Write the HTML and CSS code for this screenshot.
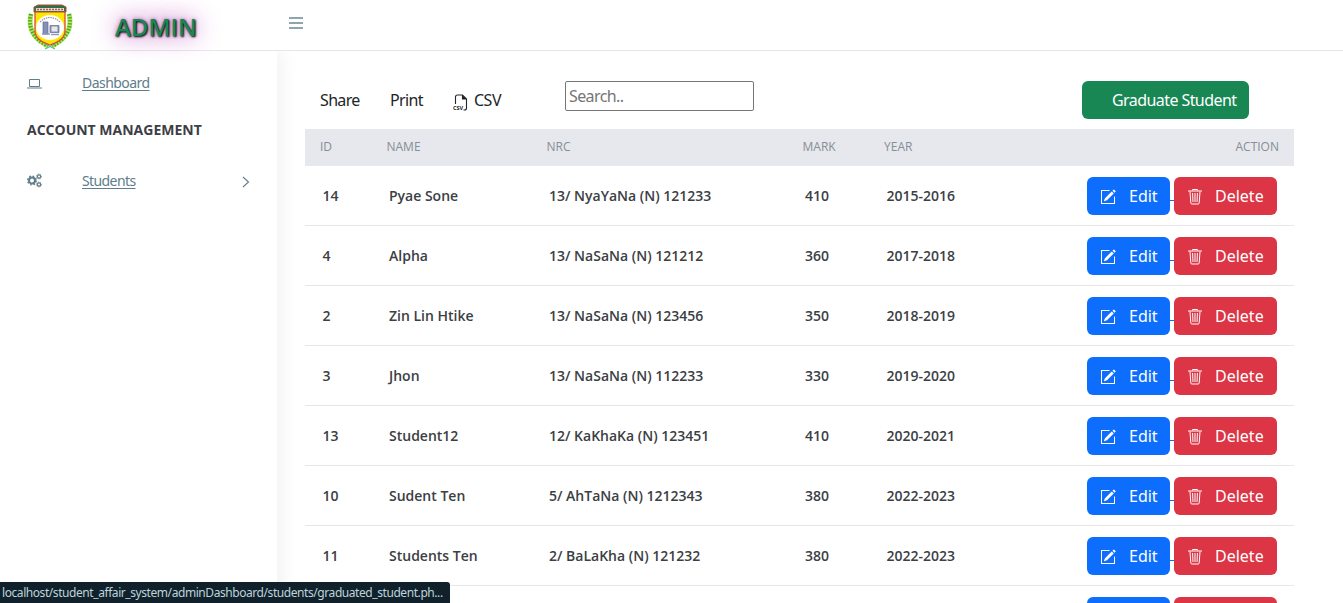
FILE: index.html
```html
<!DOCTYPE html>
<html lang="en">
<head>
<meta charset="utf-8">
<title>Admin - Graduated Students</title>
<link rel="stylesheet" href="styles.css">
</head>
<body>
<svg class="sprite" aria-hidden="true">
  <symbol id="edit" viewBox="0 0 16 16">
    <path d="M15.5 1.94a.5.5 0 0 1 0 .7L14.46 3.7l-2-2L13.5.65a.5.5 0 0 1 .7 0l1.3 1.29zM13.75 4.4l-2-2-6.8 6.82a.5.5 0 0 0-.13.2l-.8 2.42a.25.25 0 0 0 .31.31l2.42-.8a.5.5 0 0 0 .2-.13z"/>
    <path d="M1 1H9.500V2H2v12h12V7.500h1V15H1z"/>
  </symbol>
  <symbol id="trash" viewBox="0 0 16 17">
    <path d="M5.500 2.500v-1h5v1M1 3h14M3 3.500l.8 11.400q.1 1.100 1.100 1.100h6.200q1 0 1.100-1.100L13 3.500M5.600 5l.4 9M8 5v9M10.400 5l-.4 9" fill="none" stroke="currentColor" stroke-width="1"/>
  </symbol>
</svg>
<header class="topbar">
  <a class="brand">
    <svg class="crest" viewBox="0 0 46 46">
      <path d="M4 10Q-1 31 21 42M42 10Q47 31 25 42" fill="none" stroke="#b6e65a" stroke-width="5"/>
      <path d="M4 10Q-1 31 21 42M42 10Q47 31 25 42" fill="none" stroke="#4fa92d" stroke-width="4" stroke-dasharray="1.5 1.5"/>
      <path d="M18 45l10-5M28 45l-10-5" stroke="#5cc08a" stroke-width="1.3"/>
      <path d="M8 7h30v20q0 9-15 14Q8 36 8 27z" fill="#ffe600" stroke="#d94a35" stroke-width="1.300"/>
      <path d="M11 1h24l4 2v5H7V3z" fill="#2c7048" stroke="#b64b36"/>
      <path d="M9 5.500h28" stroke="#f1d8ca" stroke-width="3"/>
      <path d="M10 5.500h26" stroke="#a06562" stroke-width="1.500" stroke-dasharray="2 1"/>
      <ellipse cx="23" cy="23.500" rx="14" ry="12.500" fill="#fff"/>
      <path d="M13 18Q23 9 33 18" fill="none" stroke="#99978c" stroke-width="1.200" stroke-dasharray="1.500 .8"/>
      <path d="M16 18h5v12h-5zM23 21.500h9v7h-9z" fill="#8390b8" stroke="#626d91" stroke-width=".7"/>
      <path d="M24.500 22.500h6v5h-6z" fill="#e8e8e9"/>
      <path d="M15 30h8M24 30.500h8" stroke="#8f9abc" stroke-width="1.500"/>
    </svg>
    <span class="brand-name">ADMIN</span>
  </a>
  <span class="toggle"><i></i><i></i><i></i></span>
</header>
<div class="shell">
  <aside class="sidebar">
    <a class="nav-item">
      <svg class="nav-icon" viewBox="0 0 15 15"><path d="M2.500 4.500h10v7h-10zM0 13h15" fill="none" stroke="currentColor"/></svg>
      <span class="nav-label dashboard">Dashboard</span>
    </a>
    <h2 class="section">ACCOUNT MANAGEMENT</h2>
    <a class="nav-item">
      <svg class="nav-icon" viewBox="0 0 15 15" fill="none" stroke="currentColor">
        <circle cx="5" cy="7.500" r="3" stroke-width="2.100"/><circle cx="5" cy="7.500" r="4.400" stroke-width="1.300" stroke-dasharray="1.750 1.706"/>
        <circle cx="12" cy="3.500" r="1.600" stroke-width="1.200"/><circle cx="12" cy="3.500" r="2.400" stroke-dasharray="1 .885"/>
        <circle cx="12" cy="11.500" r="1.600" stroke-width="1.200"/><circle cx="12" cy="11.500" r="2.400" stroke-dasharray="1 .885"/>
      </svg>
      <span class="nav-label students">Students</span>
      <svg class="chevron" viewBox="0 0 8 12"><path d="M1 1l5.500 5L1 11" fill="none" stroke="currentColor" stroke-width="1.100"/></svg>
    </a>
  </aside>
  <main class="content">
    <div class="toolbar">
      <span class="share">Share</span>
      <span class="print">Print</span>
      <svg class="csv-icon" viewBox="0 0 16 17"><path d="M2.500 10V3q0-2 2-2h5l4 4v9q0 2-2 2h-1M9.500 1v4h4" fill="none" stroke="currentColor" stroke-width="1.100"/><path d="M9.500 1v4h4z" fill="currentColor"/><text x="0" y="16" class="csv-text">CSV</text></svg>
      <span class="csv">CSV</span>
      <input class="search" type="text" placeholder="Search..">
      <a class="btn graduate">Graduate Student</a>
    </div>
    <div class="table">
      <div class="row head"><span>ID</span><span>NAME</span><span>NRC</span><span>MARK</span><span>YEAR</span><span class="action">ACTION</span></div>
      <div class="row"><span>14</span><span>Pyae Sone</span><span>13/ NyaYaNa (N) 121233</span><span>410</span><span>2015-2016</span><div class="actions"><a class="btn edit"><svg><use href="#edit"/></svg>Edit</a><i class="gap"></i><a class="btn delete"><svg><use href="#trash"/></svg>Delete</a></div></div>
      <div class="row"><span>4</span><span>Alpha</span><span>13/ NaSaNa (N) 121212</span><span>360</span><span>2017-2018</span><div class="actions"><a class="btn edit"><svg><use href="#edit"/></svg>Edit</a><i class="gap"></i><a class="btn delete"><svg><use href="#trash"/></svg>Delete</a></div></div>
      <div class="row"><span>2</span><span>Zin Lin Htike</span><span>13/ NaSaNa (N) 123456</span><span>350</span><span>2018-2019</span><div class="actions"><a class="btn edit"><svg><use href="#edit"/></svg>Edit</a><i class="gap"></i><a class="btn delete"><svg><use href="#trash"/></svg>Delete</a></div></div>
      <div class="row"><span>3</span><span>Jhon</span><span>13/ NaSaNa (N) 112233</span><span>330</span><span>2019-2020</span><div class="actions"><a class="btn edit"><svg><use href="#edit"/></svg>Edit</a><i class="gap"></i><a class="btn delete"><svg><use href="#trash"/></svg>Delete</a></div></div>
      <div class="row"><span>13</span><span>Student12</span><span>12/ KaKhaKa (N) 123451</span><span>410</span><span>2020-2021</span><div class="actions"><a class="btn edit"><svg><use href="#edit"/></svg>Edit</a><i class="gap"></i><a class="btn delete"><svg><use href="#trash"/></svg>Delete</a></div></div>
      <div class="row"><span>10</span><span>Sudent Ten</span><span>5/ AhTaNa (N) 1212343</span><span>380</span><span>2022-2023</span><div class="actions"><a class="btn edit"><svg><use href="#edit"/></svg>Edit</a><i class="gap"></i><a class="btn delete"><svg><use href="#trash"/></svg>Delete</a></div></div>
      <div class="row"><span>11</span><span>Students Ten</span><span>2/ BaLaKha (N) 121232</span><span>380</span><span>2022-2023</span><div class="actions"><a class="btn edit"><svg><use href="#edit"/></svg>Edit</a><i class="gap"></i><a class="btn delete"><svg><use href="#trash"/></svg>Delete</a></div></div>
      <div class="row last"><span></span><span></span><span></span><span></span><span></span><div class="actions"><a class="btn edit"></a><i class="gap"></i><a class="btn delete"></a></div></div>
    </div>
  </main>
</div>
<div class="status">localhost/student_affair_system/adminDashboard/students/graduated_student.ph...</div>
</body>
</html>
```
FILE: styles.css
```css
* { box-sizing: border-box; }
html, body { height: 100%; }
body { margin: 0; overflow: hidden; display: flex; flex-direction: column; background: #fff; color: #212529; font-family: "Noto Sans", "Open Sans", sans-serif; }
.sprite { display: none; }
.topbar { flex: none; height: 51px; display: flex; align-items: flex-start; border-bottom: 1px solid #e7e7ea; }
.brand { width: 289px; display: flex; padding: 4px 0 0 27px; }
.crest { width: 46px; height: 46px; }
.brand-name { margin: 6px 0 0 42px; font: 600 24px/34px "Open Sans", sans-serif; color: #198754; text-shadow: 1px 1px 2px #000, 0 0 25px #a020a0, 0 0 5px #c080c8; }
.toggle { width: 14px; margin-top: 17px; display: grid; gap: 3px; }
.toggle i { height: 2px; background: #90a4ae; }
.shell { flex: 1; min-height: 0; display: flex; }
.sidebar { width: 277px; padding: 20px 27px 0; color: #607d8b; box-shadow: 1px 0 20px rgba(0,0,0,.08); clip-path: inset(0 -22px 0 0); }
.nav-item { height: 22px; display: flex; align-items: center; font-size: 14px; }
.nav-icon { width: 15px; height: 15px; margin-right: 40px; }
.nav-label { font-weight: 400; text-decoration: underline; text-underline-offset: 2px; }
.dashboard { letter-spacing: -.55px; }
.students { letter-spacing: -.6px; }
.chevron { width: 8px; height: 12px; margin: 3px 0 0 auto; }
.section { margin: 26px 0 29px; font: 700 14px/21px "Open Sans", sans-serif; color: #3e3e46; white-space: nowrap; letter-spacing: 0; }
.content { padding: 30px 0 0 28px; width: 1017px; overflow: hidden; }
.toolbar { height: 48px; display: flex; align-items: flex-start; padding-left: 15px; font-size: 16px; line-height: 38px; letter-spacing: -.65px; }
.share { width: 70px; }
.print { width: 63px; }
.csv-icon { width: 16px; height: 17px; margin-top: 13px; }
.csv-text { font: 700 5.500px "Noto Sans", sans-serif; letter-spacing: 0; fill: currentColor; }
.csv { width: 91px; margin-left: 5px; letter-spacing: -.5px; }
.search { width: 189px; height: 30px; padding: 1px 3px; border: 1px solid #767676; border-radius: 2px; font: 16px "Noto Sans", sans-serif; letter-spacing: -.6px; }
.search::placeholder { color: #757575; }
.btn { height: 38px; display: flex; align-items: center; border-radius: 6px; color: #fff; font-size: 16px; line-height: 24px; white-space: nowrap; }
.graduate { width: 167px; margin: 0 45px 0 auto; padding-left: 30px; background: #198754; letter-spacing: -.57px; }
.row { height: 60px; display: grid; grid-template-columns: 66.500px 160px 256px 81.500px 1fr auto; align-items: center; padding: 0 17px 0 17.500px; border-bottom: 1px solid #e7e7ea; font: 600 14px/20px "Open Sans", sans-serif; color: #3b4043; }
.head { height: 37px; padding: 0 15px; border: 0; background: #e7e8ed; color: #868e96; font: 400 12px/18px "Open Sans", sans-serif; padding-bottom: 2px; }
.last { height: 17px; align-items: start; padding-top: 11px; border: 0; overflow: hidden; }
.actions { display: flex; font-family: "Noto Sans", sans-serif; font-weight: 400; }
.edit { width: 83px; padding-left: 13px; background: #0d6efd; }
.edit svg { width: 16px; height: 16px; margin: 2px 13px 0 0; fill: currentColor; }
.gap { width: 4px; height: 1px; margin-top: 23px; background: #0d6efd; }
.delete { width: 103px; padding-left: 13px; background: #dc3545; }
.delete svg { width: 16px; height: 17px; margin: 2px 12px 0 0; }
.status { position: absolute; left: 0; bottom: 0; width: 450px; height: 21px; padding-left: 2px; border-radius: 0 3px 0 0; background: #10212b; color: #bfd3da; font: 12px/21px "Noto Sans", sans-serif; letter-spacing: -.43px; white-space: nowrap; }
```
